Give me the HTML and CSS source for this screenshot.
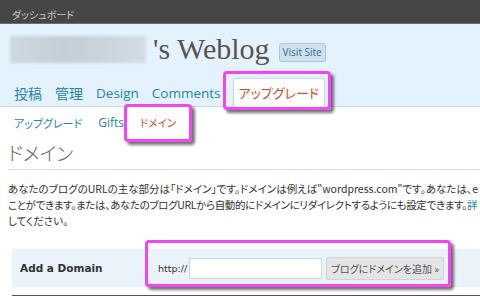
FILE: index.html
```html
<!DOCTYPE html>
<html lang="ja">
  <head>
    <meta charset="UTF-8" />
    <meta name="viewport" content="width=device-width, initial-scale=1.0" />
    <title>ドメイン</title>

    <link rel="stylesheet" href="styles.css">
  </head>
  <body>
    <div class="topbar">ダッシュボード</div>

    <div class="header">
      <div class="title-row">
        <span class="blur-name"></span>
        <h1 class="blog-title">'s Weblog</h1>
        <a href="#" class="visit-btn">Visit Site</a>
      </div>
      <ul class="tabs">
        <li><a href="#">投稿</a></li>
        <li><a href="#">管理</a></li>
        <li><a href="#" class="latin">Design</a></li>
        <li><a href="#" class="latin">Comments</a></li>
        <li class="active"><a href="#">アップグレード</a></li>
      </ul>
    </div>

    <ul class="subnav">
      <li><a href="#">アップグレード</a></li>
      <li><a href="#" class="latin">Gifts</a></li>
      <li class="current"><a href="#">ドメイン</a></li>
    </ul>

    <div class="wrap">
      <h2>ドメイン</h2>
      <p class="intro">
        あなたのブログのURLの主な部分は「ドメイン」です。ドメインは例えば"wordpress.com"です。あなたは、e<br>
        <span class="tight">ことができます。または、あなたのブログURLから自動的にドメインにリダイレクトするようにも設定できます。<a href="#">詳</a></span><br>
        してください。
      </p>

      <div class="form-row">
        <div class="form-label">Add a Domain</div>
        <div class="form-field">
          <span class="prefix">http://</span>
          <input type="text" class="domain-input" />
          <button type="button" class="add-btn">ブログにドメインを追加 &raquo;</button>
        </div>
      </div>
      <div class="form-bottom"></div>
    </div>

    <!-- highlight marks drawn over the screenshot -->
    <div class="mark mark-tab"></div>
    <div class="mark mark-sub"></div>
    <div class="mark mark-form"></div>
  </body>
</html>
```

FILE: styles.css
```css
* {
  list-style: none;
  box-sizing: border-box;
}

:root {
  --link: #2583ad;
  --active: #d54e21;
  --header-bg: #e4f2fd;
  --line: #c6d9e9;
  --mark: #f246f2;
  --jp: "Noto Sans CJK JP", sans-serif;
  --latin: "Open Sans", "Noto Sans CJK JP", sans-serif;
}

html,
body {
  margin: 0;
  overflow: hidden;
}

body {
  position: relative;
  width: 480px;
  height: 296px;
  font-family: var(--jp);
  font-feature-settings: "palt";
  background: #fff;
  color: #333;
}

ul {
  margin: 0;
  padding-left: 0;
}

a {
  text-decoration: none;
}

.latin {
  font-family: var(--latin);
}

.topbar {
  height: 24px;
  padding: 8px 0 0 12px;
  background: #464646;
  border-bottom: 1px solid #6d6d6d;
  color: #c9c9c9;
  font-size: 10px;
  line-height: 14px;
}

.header {
  height: 83px;
  padding-top: 11px;
  background: var(--header-bg);
  border-bottom: 1px solid var(--line);
}

.title-row {
  display: flex;
  align-items: center;
  height: 28px;
  padding-left: 10px;
}

.blur-name {
  width: 136px;
  height: 27px;
  background: linear-gradient(90deg, #cdd8e0, #c3cfd8 40%, #c9d4dc 70%, #d3dde4);
  filter: blur(1.5px);
}

.blog-title {
  margin: 0 0 0 7px;
  font-family: "Liberation Serif", "DejaVu Serif", serif;
  font-weight: normal;
  font-size: 30px;
  line-height: 28px;
  color: #555;
}

.visit-btn {
  margin: 6px 0 0 9px;
  padding: 0 3px;
  height: 19px;
  line-height: 17px;
  border: 1px solid #a9c6dc;
  border-radius: 3px;
  background: #cfe1ee;
  color: #2a6b93;
  font-family: var(--latin);
  font-size: 10px;
}

.tabs {
  display: flex;
  align-items: flex-end;
  gap: 5px;
  height: 29px;
  margin-top: 15px;
  padding-left: 10px;
}

.tabs li a {
  display: block;
  padding: 0 4px;
  font-size: 14px;
  line-height: 28px;
  color: var(--link);
}

.tabs .latin {
  font-size: 13.5px;
}

.tabs li.active {
  margin-left: 3px;
}

.tabs li.active a {
  height: 29px;
  padding: 0 5px;
  background: #fff;
  border: 1px solid var(--line);
  border-bottom: none;
  border-radius: 3px 3px 0 0;
  color: var(--active);
  font-size: 13px;
}

.subnav {
  display: flex;
  gap: 8px;
  height: 33px;
  padding: 9px 0 0 10px;
}

.subnav a {
  display: block;
  padding: 0 4px;
  font-size: 11px;
  line-height: 14px;
  color: var(--link);
}

.subnav .latin {
  font-size: 12px;
}

.subnav .current a {
  color: var(--active);
  font-size: 10.5px;
}

.wrap {
  padding-left: 8px;
}

h2 {
  margin: 0;
  height: 30px;
  padding-top: 2px;
  border-bottom: 1px solid #dcdcdc;
  font-weight: 300;
  font-size: 19px;
  line-height: 22px;
  color: #666;
}

.intro {
  margin: 11px 0 0;
  white-space: nowrap;
  font-size: 10.5px;
  line-height: 16px;
  color: #333;
}

.intro .tight {
  letter-spacing: -0.35px;
}

.intro a {
  color: var(--link);
}

.form-row {
  display: flex;
  align-items: center;
  height: 38px;
  margin: 20px 0 0 4px;
  background: #eaf2fa;
}

.form-label {
  width: 146px;
  padding-left: 8px;
  font-family: "DejaVu Sans", sans-serif;
  font-weight: bold;
  font-size: 10.5px;
  color: #333;
}

.form-field {
  display: flex;
  align-items: center;
}

.prefix {
  font-family: "DejaVu Sans", sans-serif;
  font-size: 9.5px;
  color: #333;
}

.domain-input {
  width: 133px;
  height: 21px;
  margin: 0 0 0 2px;
  padding: 0;
  border: 1px solid #c8d8e6;
  background: #fff;
}

.add-btn {
  height: 23px;
  margin-left: 4px;
  padding: 0 4px;
  border: 1px solid #d2d2d2;
  border-radius: 2px;
  background: #e4e4e4;
  color: #555;
  font-family: var(--jp);
  font-feature-settings: "palt";
  font-size: 10px;
}

.form-bottom {
  height: 2px;
  margin: 8px 0 0 4px;
  background: #555;
}

.mark {
  position: absolute;
  border: 3px solid var(--mark);
  border-radius: 4px;
  box-shadow: 3px 3px 3px rgba(0, 0, 0, 0.55);
}

.mark-tab {
  left: 223px;
  top: 71px;
  width: 108px;
  height: 39px;
}

.mark-sub {
  left: 124px;
  top: 104px;
  width: 68px;
  height: 38px;
}

.mark-form {
  left: 145px;
  top: 240px;
  width: 306px;
  height: 47px;
}
```
